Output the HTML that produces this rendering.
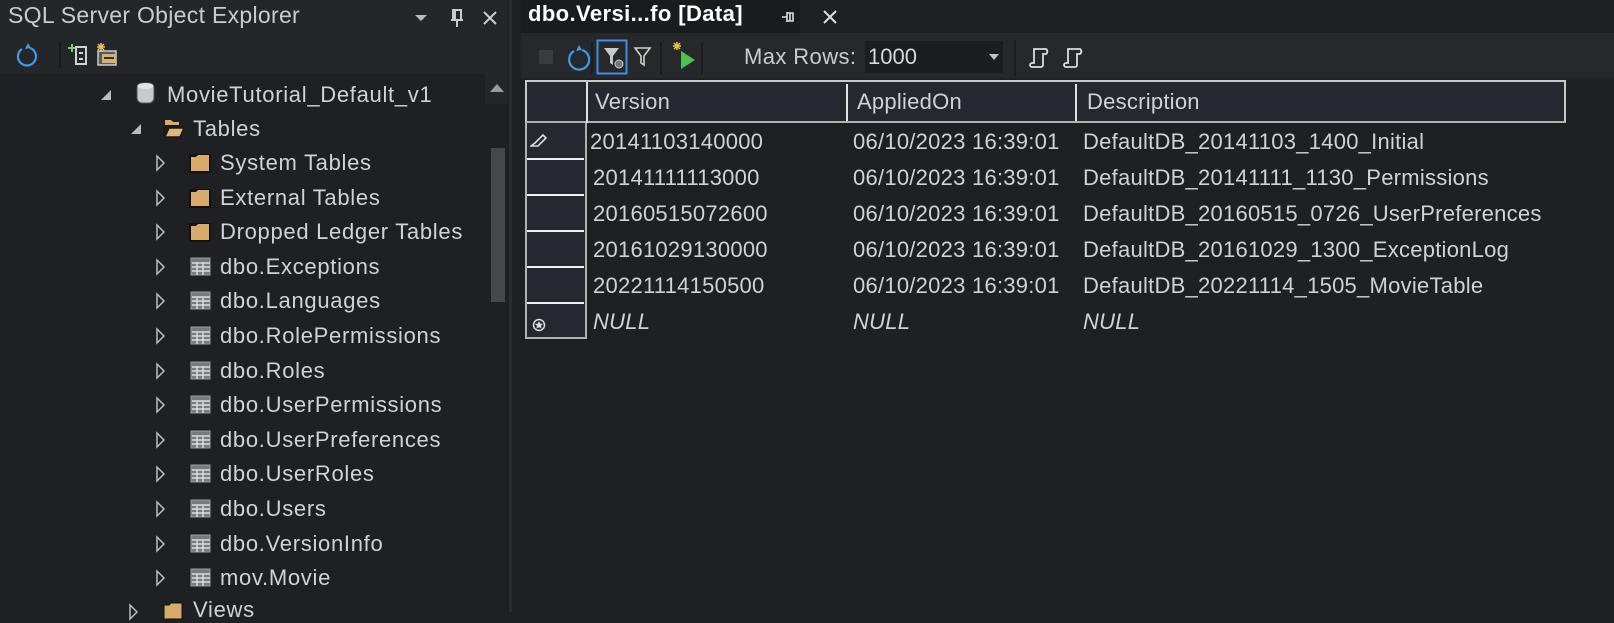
<!DOCTYPE html>
<html><head><style>
*{margin:0;padding:0;box-sizing:border-box}
body{width:1614px;height:612px;background:#1f2023;overflow:hidden;font-family:"Liberation Sans",sans-serif;color:#cfd2d6;position:relative}
.a{position:absolute;white-space:nowrap}
.t{font-size:22px;letter-spacing:0.7px}
.d{font-size:22px;letter-spacing:0.25px}
</style></head><body>
<div class="a" style="left:0;top:0;width:510px;height:74px;background:#25262a"></div>
<div class="a" style="left:8px;top:2px;font-size:23px;letter-spacing:0.3px;color:#c8ccd2">SQL Server Object Explorer</div>
<svg class="a" style="left:412px;top:8px" width="90" height="20"><path d="M3 7h12l-6 6z" fill="#b8bcc2"/><path d="M41 2h8v10h-8zM39 12h12M45 12v7M43 2v10" stroke="#c8ccd2" stroke-width="2" fill="none"/><path d="M72 4l12 12M84 4l-12 12" stroke="#c8ccd2" stroke-width="2"/></svg>
<svg class="a" style="left:12px;top:40px" width="110" height="30"><path d="M10 9a9 9 0 1 0 8 -1" stroke="#3d9be9" stroke-width="2.2" fill="none"/><path d="M16 3l3 5-6 1z" fill="#3d9be9"/><line x1="48" y1="2" x2="48" y2="28" stroke="#1a1a1c" stroke-width="2"/><path d="M60 4v8M56 8h8" stroke="#6fcf6f" stroke-width="2"/><rect x="64" y="7" width="10" height="17" stroke="#cfd2d6" stroke-width="2" fill="none"/><path d="M67 13h4M67 19h4" stroke="#cfd2d6" stroke-width="2"/><path d="M86 4l6 6M92 4l-6 6M89 3v8M85 7h8" stroke="#e8c04a" stroke-width="1.5"/><rect x="86" y="11" width="18" height="14" fill="#5a5a5a" stroke="#ccc" stroke-width="1.5"/><rect x="90" y="14" width="14" height="9" fill="#d8b070"/><path d="M92 18h10" stroke="#333" stroke-width="2"/></svg>
<div class="a" style="left:485px;top:74px;width:25px;height:30px;background:#25262a"></div>
<svg class="a" style="left:489px;top:82px" width="16" height="12"><path d="M1 10h14l-7-8z" fill="#9a9ca0"/></svg>
<div class="a" style="left:491px;top:148px;width:14px;height:154px;background:#46484e"></div>
<div class="a" style="left:509px;top:0;width:3px;height:612px;background:#2b2c30"></div>
<svg class="a" style="left:100px;top:88px" width="14" height="14"><path d="M11 2v10H1z" fill="#b8bcc2"/></svg>
<svg class="a" style="left:136px;top:81px" width="20" height="24"><rect x="1" y="2" width="17" height="20" rx="5" fill="#c7c9cc" stroke="#555" stroke-width="1"/><ellipse cx="9.5" cy="5" rx="8" ry="3" fill="#e2e3e5"/></svg>
<div class="a t" style="left:167px;top:82px">MovieTutorial_Default_v1</div>
<svg class="a" style="left:130px;top:122px" width="14" height="14"><path d="M11 2v10H1z" fill="#b8bcc2"/></svg>
<svg class="a" style="left:162px;top:118px" width="24" height="22"><path d="M1 20V4h8l2 2h7v14z" fill="#1a1a1a"/><path d="M3 19V7h14V4H11L9 2H3z" fill="#d9ab6a"/><path d="M3 19l4-9h15l-4 9z" fill="#e0b77a" stroke="#1a1a1a" stroke-width="1.5"/></svg>
<div class="a t" style="left:193px;top:116px">Tables</div>
<div id="tree"></div>
<script>
var items=[["f","System Tables"],["f","External Tables"],["f","Dropped Ledger Tables"],["t","dbo.Exceptions"],["t","dbo.Languages"],["t","dbo.RolePermissions"],["t","dbo.Roles"],["t","dbo.UserPermissions"],["t","dbo.UserPreferences"],["t","dbo.UserRoles"],["t","dbo.Users"],["t","dbo.VersionInfo"],["t","mov.Movie"]];
var h="";
items.forEach(function(it,i){var y=163+i*34.6;
h+='<svg class="a" style="left:155px;top:'+(y-9)+'px" width="12" height="18"><path d="M2 2l7 7-7 7z" fill="none" stroke="#b8bcc2" stroke-width="1.5"/></svg>';
if(it[0]=="f")h+='<svg class="a" style="left:189px;top:'+(y-11)+'px" width="24" height="22"><rect x="0" y="2" width="22" height="19" fill="#111"/><path d="M2 19V5h5l2-2h11v16z" fill="#d9ab6a"/></svg>';
else h+='<svg class="a" style="left:190px;top:'+(y-10)+'px" width="22" height="20"><rect x="1" y="1" width="19" height="17" fill="#777a7e" stroke="#9a9da2"/><path d="M2 6h18M2 10h18M2 14h18M7 6v12M13 6v12" stroke="#dcdde0" stroke-width="1.4"/></svg>';
h+='<div class="a t" style="left:220px;top:'+(y-13)+'px">'+it[1]+'</div>';});
h+='<svg class="a" style="left:128px;top:603px" width="12" height="18"><path d="M2 2l7 7-7 7z" fill="none" stroke="#b8bcc2" stroke-width="1.5"/></svg><svg class="a" style="left:162px;top:600px" width="24" height="22"><path d="M2 19V5h5l2-2h11v16z" fill="#d9ab6a" stroke="#111"/></svg><div class="a t" style="left:193px;top:597px">Views</div>';
document.getElementById("tree").innerHTML=h;
</script>
<div class="a" style="left:512px;top:0;width:1102px;height:33px;background:#1f2023"></div>
<div class="a" style="left:521px;top:0;width:279px;height:33px;background:#1a1b1e"></div>
<div class="a" style="left:528px;top:1px;font-size:22px;font-weight:bold;letter-spacing:0.4px;color:#fff">dbo.Versi...fo [Data]</div>
<svg class="a" style="left:778px;top:6px" width="60" height="22"><path d="M4 11h5M9 6v10M9 7h6v8H9M12 7v8" stroke="#ddd" stroke-width="1.6" fill="none"/><path d="M46 5l12 12M58 5l-12 12" stroke="#ddd" stroke-width="2"/></svg>
<div class="a" style="left:521px;top:33px;width:1093px;height:45px;background:#26282c"></div>
<svg class="a" style="left:535px;top:38px" width="230" height="40"><rect x="4" y="12" width="14" height="14" fill="#3a3b3f"/><path d="M39 13a10 10 0 1 0 8 -1" stroke="#3d9be9" stroke-width="2.2" fill="none"/><path d="M44 7l3 5-6 1z" fill="#3d9be9"/><line x1="57" y1="4" x2="57" y2="36" stroke="#1c1c1e" stroke-width="2"/><rect x="62.5" y="2.5" width="29" height="33" fill="none" stroke="#3d8fe0" stroke-width="2"/><path d="M69 10h15l-6 8v9l-3-2v-7z" fill="#c8c8c8"/><circle cx="84" cy="26" r="4" fill="#777" stroke="#ccc"/><path d="M100 10h15l-6 8v9l-3-2v-7z" fill="none" stroke="#d0d0d0" stroke-width="1.6"/><line x1="126" y1="4" x2="126" y2="36" stroke="#1c1c1e" stroke-width="2"/><path d="M139 5l6 6M145 5l-6 6M142 4v8M138 8h8" stroke="#e8c04a" stroke-width="1.5"/><path d="M146 13l14 9-14 9z" fill="#4ec24e"/><line x1="167" y1="4" x2="167" y2="36" stroke="#1c1c1e" stroke-width="2"/></svg>
<div class="a" style="left:744px;top:44px;font-size:22px;letter-spacing:0.4px;color:#c8ccd2">Max Rows:</div>
<div class="a" style="left:865px;top:41px;width:138px;height:32px;background:#1c1d20"></div>
<div class="a" style="left:868px;top:44px;font-size:22px;color:#d6d8dc">1000</div>
<svg class="a" style="left:988px;top:52px" width="14" height="10"><path d="M1 2h10l-5 6z" fill="#c0c2c6"/></svg>
<div class="a" style="left:1014px;top:40px;width:2px;height:36px;background:#1c1c1e"></div>
<svg class="a" style="left:1029px;top:46px" width="60" height="24"><path d="M5 3h12a3 3 0 0 1 0 5h-3v11a2 2 0 0 1-2 2H3a2 2 0 0 1 0-4h2z" fill="none" stroke="#ddd" stroke-width="1.8"/><path d="M39 3h12a3 3 0 0 1 0 5h-3v11a2 2 0 0 1-2 2H37a2 2 0 0 1 0-4h2z" fill="none" stroke="#ddd" stroke-width="1.8"/></svg>
<div class="a" style="left:525px;top:80px;width:1041px;height:43px;background:#262830;border:2px solid #c8c8c8;border-bottom:2px solid #b0b0b0"></div>
<div class="a" style="left:586px;top:82px;width:2px;height:41px;background:#e0e0e0"></div>
<div class="a" style="left:846px;top:84px;width:2px;height:37px;background:#e0e0e0"></div>
<div class="a" style="left:1075px;top:84px;width:2px;height:37px;background:#e0e0e0"></div>
<div class="a d" style="left:595px;top:89px">Version</div>
<div class="a d" style="left:857px;top:89px">AppliedOn</div>
<div class="a d" style="left:1087px;top:89px">Description</div>
<div class="a" style="left:525px;top:123px;width:62px;height:216px;background:#262830;border-left:2px solid #b0b0b0;border-right:2px solid #b0b0b0;border-bottom:2px solid #b0b0b0"></div>
<div class="a" style="left:527px;top:158px;width:57px;height:2px;background:#f0f0f0"></div>
<div class="a" style="left:527px;top:194px;width:57px;height:2px;background:#f0f0f0"></div>
<div class="a" style="left:527px;top:230px;width:57px;height:2px;background:#f0f0f0"></div>
<div class="a" style="left:527px;top:266px;width:57px;height:2px;background:#f0f0f0"></div>
<div class="a" style="left:527px;top:302px;width:57px;height:2px;background:#f0f0f0"></div>
<svg class="a" style="left:530px;top:134px" width="18" height="14"><path d="M1 12h7l8-8-3-3-8 8z" fill="none" stroke="#ddd" stroke-width="1.6"/></svg>
<svg class="a" style="left:532px;top:318px" width="14" height="14"><circle cx="7" cy="7" r="5.5" fill="none" stroke="#ddd" stroke-width="1.5"/><path d="M7 3l1.2 2.6 2.8.3-2 1.9.6 2.8L7 9.2 4.4 10.6 5 7.8 3 5.9l2.8-.3z" fill="#ddd"/></svg>
<div id="rows"></div>
<script>
var r=[["20141103140000","06/10/2023 16:39:01","DefaultDB_20141103_1400_Initial"],["20141111113000","06/10/2023 16:39:01","DefaultDB_20141111_1130_Permissions"],["20160515072600","06/10/2023 16:39:01","DefaultDB_20160515_0726_UserPreferences"],["20161029130000","06/10/2023 16:39:01","DefaultDB_20161029_1300_ExceptionLog"],["20221114150500","06/10/2023 16:39:01","DefaultDB_20221114_1505_MovieTable"]];
var s="";r.forEach(function(x,i){var y=129+i*36;
s+='<div class="a d" style="left:'+(i==0?590:593)+'px;top:'+y+'px">'+x[0]+'</div><div class="a d" style="left:853px;top:'+y+'px">'+x[1]+'</div><div class="a d" style="left:1083px;top:'+y+'px">'+x[2]+'</div>';});
[593,853,1083].forEach(function(l){s+='<div class="a d" style="left:'+l+'px;top:309px;font-style:italic">NULL</div>';});
document.getElementById("rows").innerHTML=s;
</script>
</body></html>
